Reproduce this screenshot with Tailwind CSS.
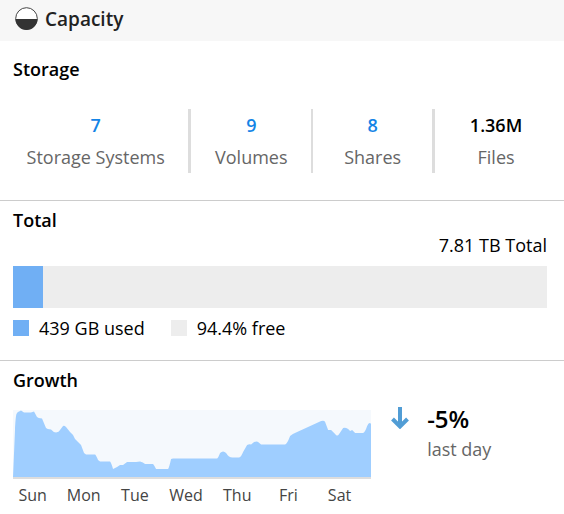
<!DOCTYPE html>
<html lang="en">
<head>
  <meta charset="UTF-8" />
  <title>Capacity</title>
  <script src="https://cdn.jsdelivr.net/npm/@tailwindcss/browser@4"></script>
</head>
<body class="bg-white font-['Open_Sans',sans-serif] text-lg leading-6 text-black">
  <header class="flex items-center gap-[7px] h-[41px] pl-[15px] pb-1 bg-[#f7f7f7] text-[#222]">
    <svg class="size-[23px]" viewBox="0 0 23 23" fill="none">
      <circle cx="11.5" cy="11.5" r="10.8" fill="#fff" stroke="#444" stroke-width="1" />
      <path d="M.5 12h22a11 11 0 0 1-22 0z" fill="#333" />
    </svg>
    <h1 class="text-[19px] leading-6 font-semibold">Capacity</h1>
  </header>

  <section class="pt-4 pb-[27px] border-b border-[#ccc]">
    <h2 class="px-[13px] font-semibold">Storage</h2>
    <div class="mt-7 ml-[3px] mr-[7px] grid grid-cols-[34fr_22fr_22fr_22fr] text-center leading-8">
      <div class="border-r-3 border-[#ddd]">
        <a href="#" class="block font-semibold text-[#1484e6]">7</a>
        <p class="text-[#666]">Storage Systems</p>
      </div>
      <div class="border-r-2 border-[#ddd]">
        <a href="#" class="block font-semibold text-[#1484e6]">9</a>
        <p class="text-[#666]">Volumes</p>
      </div>
      <div class="border-r-3 border-[#ddd]">
        <a href="#" class="block font-semibold text-[#1484e6]">8</a>
        <p class="text-[#666]">Shares</p>
      </div>
      <div>
        <p class="font-semibold">1.36M</p>
        <p class="text-[#666]">Files</p>
      </div>
    </div>
  </section>

  <section class="pt-[7px] pb-5 pl-[13px] pr-[17px] border-b border-[#ccc]">
    <h2 class="font-semibold">Total</h2>
    <p class="mt-px text-right">7.81 TB Total</p>
    <div class="mt-[9px] h-[42px] bg-[#ededed]">
      <div class="h-full bg-[#70aff4]" style="width: 5.6%"></div>
    </div>
    <ul class="mt-2 flex gap-[26px]">
      <li class="flex items-center gap-[10px]"><span class="size-4 bg-[#70aff4]"></span>439 GB used</li>
      <li class="flex items-center gap-[10px]"><span class="size-4 bg-[#ededed]"></span>94.4% free</li>
    </ul>
  </section>

  <section class="pt-[7px] pl-[13px]">
    <h2 class="font-semibold">Growth</h2>
    <div class="flex mt-[18px]">
      <div class="w-[65%]">
        <svg class="block w-full h-[67px] bg-[#f5f9fd]" viewBox="0 0 358 67" preserveAspectRatio="none">
          <path fill="#9fceff" d="M0 67L2 20C3 4 3 4 5 2L8 .5L11 2.5H18L21 1.5L24 7Q25 8 29 8.500L33 18Q34 19 38 19.500Q40 22 43 22.500Q46 22 47 20L50 16Q51 15 53 17L57 22L60 25L62 29L68 35L71 43L73 44.500H82Q83 45 85 50L87 51.500H97Q98 52 100 59Q102 58 104 57L107 55H110L114 52H123L127 51.500Q130 52 132 54H140Q141 55 143 59H155Q156 58 158 49L160 48.500H204Q205 48 207 43Q210 40 213 43Q216 48 220 47.500H226Q228 47 230 42L234 35Q236 34 238 34.500L241 32Q244 31 245 32L248 34.500H272Q274 34 277 26Q279 24 284 22L308 11Q311 10 312 12L315 20H318L322 24Q324 27 326 24L330 18Q332 17 335 19L337 21L339 20L342 23H350Q352 22 354 16Q356 11 358 14V67z" />
        </svg>
        <div class="h-[2px] bg-[#ddd]"></div>
        <div class="mt-1 -ml-[6px] pr-[6px] grid grid-cols-7 text-center text-base text-[#444]">
          <span>Sun</span>
          <span>Mon</span>
          <span>Tue</span>
          <span>Wed</span>
          <span>Thu</span>
          <span>Fri</span>
          <span>Sat</span>
        </div>
      </div>
      <svg class="ml-5 mt-[-3px] w-[18px] h-[22px]" viewBox="0 0 18 22" fill="none" stroke="#519dd5">
        <path d="M9 0V18" stroke-width="4" />
        <path d="M1.500 12L9 19.500L16.500 12" stroke-width="4" />
      </svg>
      <div class="ml-[18px]">
        <p class="mt-[-3px] text-2xl leading-6 font-semibold">-5%</p>
        <p class="mt-[6px] leading-6 text-[#666]">last day</p>
      </div>
    </div>
  </section>
</body>
</html>
